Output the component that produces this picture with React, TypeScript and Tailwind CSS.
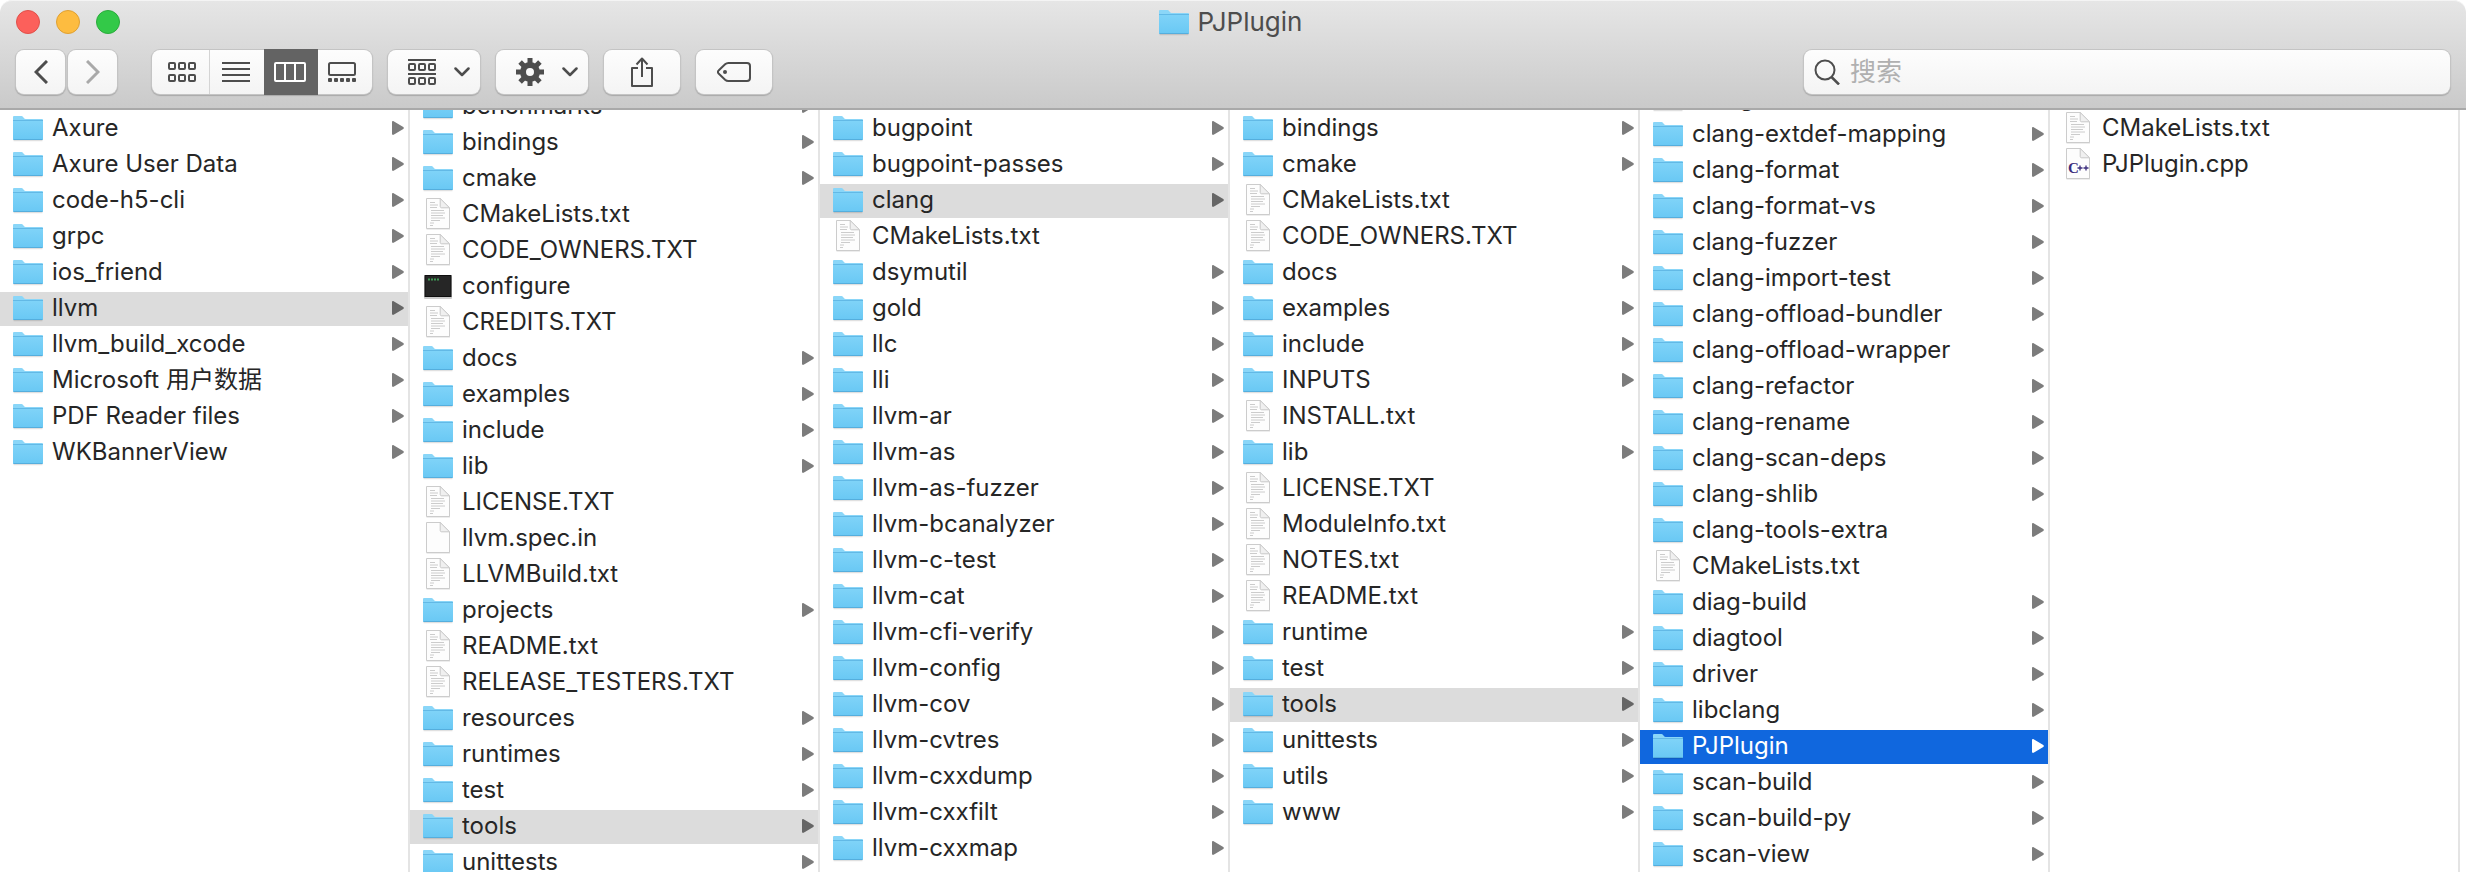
import { useState } from 'react';

type Kind = 'folder' | 'text' | 'blank' | 'exec' | 'cpp';

interface Entry {
  name: string;
  kind: Kind;
}

interface ColumnData {
  id: string;
  entries: Entry[];
  selected?: string;
  active?: boolean;
  // 列表的滚动位置
  scroll?: string;
}

const d = (name: string): Entry => ({ name, kind: 'folder' });
const f = (name: string, kind: Kind = 'text'): Entry => ({ name, kind });

const columns: ColumnData[] = [
  {
    id: 'home',
    selected: 'llvm',
    entries: [
      d('Axure'), d('Axure User Data'), d('code-h5-cli'), d('grpc'), d('ios_friend'), d('llvm'),
      d('llvm_build_xcode'), d('Microsoft 用户数据'), d('PDF Reader files'), d('WKBannerView'),
    ],
  },
  {
    id: 'llvm',
    selected: 'tools',
    scroll: '-mt-[22px]',
    entries: [
      d('benchmarks'), d('bindings'), d('cmake'), f('CMakeLists.txt'), f('CODE_OWNERS.TXT'),
      f('configure', 'exec'), f('CREDITS.TXT'), d('docs'), d('examples'), d('include'), d('lib'),
      f('LICENSE.TXT'), f('llvm.spec.in', 'blank'), f('LLVMBuild.txt'), d('projects'),
      f('README.txt'), f('RELEASE_TESTERS.TXT'), d('resources'), d('runtimes'), d('test'),
      d('tools'), d('unittests'),
    ],
  },
  {
    id: 'llvm/tools',
    selected: 'clang',
    entries: [
      d('bugpoint'), d('bugpoint-passes'), d('clang'), f('CMakeLists.txt'), d('dsymutil'),
      d('gold'), d('llc'), d('lli'), d('llvm-ar'), d('llvm-as'), d('llvm-as-fuzzer'),
      d('llvm-bcanalyzer'), d('llvm-c-test'), d('llvm-cat'), d('llvm-cfi-verify'),
      d('llvm-config'), d('llvm-cov'), d('llvm-cvtres'), d('llvm-cxxdump'), d('llvm-cxxfilt'),
      d('llvm-cxxmap'),
    ],
  },
  {
    id: 'clang',
    selected: 'tools',
    entries: [
      d('bindings'), d('cmake'), f('CMakeLists.txt'), f('CODE_OWNERS.TXT'), d('docs'),
      d('examples'), d('include'), d('INPUTS'), f('INSTALL.txt'), d('lib'), f('LICENSE.TXT'),
      f('ModuleInfo.txt'), f('NOTES.txt'), f('README.txt'), d('runtime'), d('test'), d('tools'),
      d('unittests'), d('utils'), d('www'),
    ],
  },
  {
    id: 'clang/tools',
    selected: 'PJPlugin',
    active: true,
    scroll: '-mt-[30px]',
    entries: [
      d('clang-diff'), d('clang-extdef-mapping'), d('clang-format'), d('clang-format-vs'),
      d('clang-fuzzer'), d('clang-import-test'), d('clang-offload-bundler'),
      d('clang-offload-wrapper'), d('clang-refactor'), d('clang-rename'), d('clang-scan-deps'),
      d('clang-shlib'), d('clang-tools-extra'), f('CMakeLists.txt'), d('diag-build'),
      d('diagtool'), d('driver'), d('libclang'), d('PJPlugin'), d('scan-build'),
      d('scan-build-py'), d('scan-view'),
    ],
  },
  {
    id: 'PJPlugin',
    entries: [f('CMakeLists.txt'), f('PJPlugin.cpp', 'cpp')],
  },
];

function FolderIcon() {
  return (
    <svg viewBox="0 0 32 28" className="w-8 h-7 shrink-0" aria-hidden="true">
      <defs>
        <linearGradient id="folderFront" x1="0" y1="0" x2="0" y2="1">
          <stop offset="0" stopColor="#7fd3f8" />
          <stop offset="1" stopColor="#69c8f4" />
        </linearGradient>
      </defs>
      <path d="M1.5 26.5h29" stroke="#000" strokeOpacity="0.12" strokeWidth="1.5" />
      <path d="M1 3a1 1 0 0 1 1-1h7.5c.6 0 1 .2 1.4.7l1.2 1.5c.4.5.8.8 1.5.8H30a1 1 0 0 1 1 1v4H1z" fill="#8ad6f8" />
      <path d="M1 6.8h30V25a1 1 0 0 1-1 1H2a1 1 0 0 1-1-1z" fill="url(#folderFront)" />
      <path d="M1 6.5h30" stroke="#62b9e6" strokeWidth="1" />
      <path d="M1.5 25.5h29" stroke="#55aedd" strokeWidth="1" />
    </svg>
  );
}

function PageShape() {
  return (
    <>
      <path d="M4.5 1.5h13.8L28 11v20.5H4.5z" fill="#000" fillOpacity="0.14" />
      <path d="M4.5.5h13.7l9.3 9.3v20.7h-23z" fill="#fdfdfd" stroke="#cccccc" />
      <path d="M18.2.5v7.8c0 1 .5 1.5 1.5 1.5h7.8z" fill="#f0f0f0" stroke="#c8c8c8" />
    </>
  );
}

function FileIcon({ kind }: { kind: Kind }) {
  if (kind === 'folder') return <FolderIcon />;
  if (kind === 'exec') {
    return (
      <svg viewBox="0 0 32 32" className="size-8 shrink-0" aria-hidden="true">
        <rect x="2" y="6" width="28" height="23" rx="1" fill="#000" fillOpacity="0.2" />
        <rect x="3" y="5.5" width="26" height="21" fill="#262626" stroke="#0f0f0f" />
        <path d="M6 9.500h2M9 9.500h2M12 9.500h2M15 9.500h2" stroke="#3f9a55" strokeWidth="2" />
      </svg>
    );
  }
  return (
    <svg viewBox="0 0 32 32" className="size-8 shrink-0" aria-hidden="true">
      <PageShape />
      {kind === 'text' && (
        <path
          d="M8 4.500h5M8 7h8M8 9.500h7M9 12.500h13M9 15h14M9 17.500h12M9 20h14M9 22.500h9M8 25h4M8 27.500h3"
          stroke="#cccccc"
          fill="none"
        />
      )}
      {kind === 'cpp' && (
        <>
          <text x="6" y="25" fontSize="15" fontWeight="700" fill="#3a2c7c" fontFamily="Liberation Serif, serif">C</text>
          <path d="M15.500 20h5M18 17.500v5M21.500 20h5M24 17.500v5" stroke="#3a2c7c" strokeWidth="1.300" />
        </>
      )}
    </svg>
  );
}

interface RowProps {
  entry: Entry;
  selected: boolean;
  active: boolean;
  onSelect: () => void;
}

function Row({ entry, selected, active, onSelect }: RowProps) {
  let look = 'text-[#262626]';
  let arrow = 'text-[#7c7c7c]';
  if (selected && active) {
    look = 'bg-[#1067de] text-white';
    arrow = 'text-white';
  } else if (selected) {
    look = 'bg-[#dcdcdc] text-[#262626]';
    arrow = 'text-[#666666]';
  }

  return (
    <li className="py-px">
      <button
        type="button"
        onClick={onSelect}
        className={`flex h-[34px] w-full items-center pb-0.5 pl-3 pr-1 text-left text-2xl leading-8 ${look}`}
      >
        <FileIcon kind={entry.kind} />
        <span className="ml-2 flex-1 truncate">{entry.name}</span>
        {entry.kind === 'folder' && (
          <svg viewBox="0 0 12 14" className={`h-3.5 w-3 shrink-0 ${arrow}`} aria-hidden="true">
            <path d="M0 1.200C0 .2.800-.2 1.600.200l9.700 5.900c.7.400.7 1.400 0 1.800l-9.700 5.900C.8 14.200 0 13.800 0 12.800z" fill="currentColor" />
          </svg>
        )}
      </button>
    </li>
  );
}

function Column({ column }: { column: ColumnData }) {
  const [selected, setSelected] = useState(column.selected);

  return (
    <div className="min-w-0 overflow-hidden border-r-2 border-[#e4e4e4] pt-px">
      <ul className={column.scroll}>
        {column.entries.map((entry) => (
          <Row
            key={entry.name}
            entry={entry}
            selected={entry.name === selected}
            active={Boolean(column.active)}
            onSelect={() => setSelected(entry.name)}
          />
        ))}
      </ul>
    </div>
  );
}

const raised = 'bg-linear-to-b from-[#fdfdfd] to-[#f4f4f4] shadow-[0_0_0_1px_#c4c4c4,0_1px_1px_1px_#a9a9a9]';
const toolButton = `flex h-11 items-center rounded-lg text-[#4d4d4d] ${raised}`;

function ChevronDown() {
  return (
    <svg viewBox="0 0 16 10" className="h-2.5 w-4" fill="none" stroke="currentColor" strokeWidth="2.500" strokeLinecap="round" strokeLinejoin="round" aria-hidden="true">
      <path d="M1.500 1.500 8 8l6.500-6.500" />
    </svg>
  );
}

function GridIcon() {
  return (
    <svg viewBox="0 0 28 20" className="h-5 w-7" fill="none" stroke="currentColor" strokeWidth="2" aria-hidden="true">
      {[1, 11, 21].map((x) => (
        <g key={x}>
          <rect x={x} y="1" width="6" height="6" rx="1" />
          <rect x={x} y="13" width="6" height="6" rx="1" />
        </g>
      ))}
    </svg>
  );
}

function ListIcon() {
  return (
    <svg viewBox="0 0 28 20" className="h-5 w-7" stroke="currentColor" strokeWidth="2" aria-hidden="true">
      <path d="M0 1h28M0 7h28M0 13h28M0 19h28" />
    </svg>
  );
}

function ColumnsIcon() {
  return (
    <svg viewBox="0 0 32 20" className="h-5 w-8" fill="none" stroke="currentColor" strokeWidth="2" aria-hidden="true">
      <rect x="1" y="1" width="30" height="18" rx="1" />
      <path d="M11 1v18M21 1v18" />
    </svg>
  );
}

function GalleryIcon() {
  return (
    <svg viewBox="0 0 28 20" className="h-5 w-7" aria-hidden="true">
      <rect x="1" y="1" width="26" height="12" rx="1.500" fill="none" stroke="currentColor" strokeWidth="2" />
      {[0, 6, 12, 18, 24].map((x) => (
        <rect key={x} x={x} y="16" width="4" height="4" rx="1" fill="currentColor" />
      ))}
    </svg>
  );
}

function GroupIcon() {
  return (
    <svg viewBox="0 0 28 26" className="h-[26px] w-7" fill="none" stroke="currentColor" strokeWidth="2" aria-hidden="true">
      <path d="M0 1h28M0 15h28" />
      {[1, 11, 21].map((x) => (
        <g key={x}>
          <rect x={x} y="5" width="6" height="6" rx="1" />
          <rect x={x} y="19" width="6" height="6" rx="1" />
        </g>
      ))}
    </svg>
  );
}

function GearIcon() {
  return (
    <svg viewBox="0 0 28 28" className="size-7" aria-hidden="true">
      {[0, 45, 90, 135].map((angle) => (
        <path key={angle} d="M11.500 0h5v8h-5zM11.500 20h5v8h-5z" fill="currentColor" transform={`rotate(${angle} 14 14)`} />
      ))}
      <circle cx="14" cy="14" r="7" fill="none" stroke="currentColor" strokeWidth="6" />
    </svg>
  );
}

function ShareIcon() {
  return (
    <svg viewBox="0 0 24 30" className="h-[30px] w-6" fill="none" stroke="currentColor" strokeWidth="2" aria-hidden="true">
      <path d="M8 11H2v18h20V11h-6M12 20V2M6.500 7.500 12 1.500l5.500 6" strokeLinejoin="round" />
    </svg>
  );
}

function TagIcon() {
  return (
    <svg viewBox="0 0 34 20" className="h-5 w-[34px]" aria-hidden="true">
      <path d="M11.500 1H30a3 3 0 0 1 3 3v12a3 3 0 0 1-3 3H11.500a5 5 0 0 1-3.400-1.300L1.600 11.500a2 2 0 0 1 0-3l6.500-6.200A5 5 0 0 1 11.500 1z" fill="none" stroke="currentColor" strokeWidth="2" />
      <circle cx="8" cy="10" r="2" fill="currentColor" />
    </svg>
  );
}

const views = [
  { id: 'icons', label: '图标', Icon: GridIcon, box: 'w-[58px] pl-0.5 border-r border-[#d4d4d4]' },
  { id: 'list', label: '列表', Icon: ListIcon, box: 'w-[54px] pr-0.5' },
  { id: 'columns', label: '分栏', Icon: ColumnsIcon, box: 'w-[54px] pr-0.5' },
  { id: 'gallery', label: '画廊', Icon: GalleryIcon, box: 'w-[54px] pr-1.5' },
];

function Toolbar() {
  const [view, setView] = useState('columns');

  return (
    <div className="flex items-center px-4 pt-1.5">
      <div className="flex gap-[3px]">
        <button type="button" aria-label="后退" className={`w-[49px] justify-center ${toolButton}`}>
          <svg viewBox="0 0 14 24" className="h-6 w-3.5" fill="none" stroke="currentColor" strokeWidth="3" aria-hidden="true">
            <path d="M13 1 2 12l11 11" />
          </svg>
        </button>
        <button type="button" aria-label="前进" className={`w-[49px] justify-center ${toolButton}`}>
          <svg viewBox="0 0 14 24" className="h-6 w-3.5 text-[#a9a9a9]" fill="none" stroke="currentColor" strokeWidth="3" aria-hidden="true">
            <path d="m1 1 11 11L1 23" />
          </svg>
        </button>
      </div>

      {/* 显示方式 */}
      <div className={`ml-[35px] flex h-11 items-center rounded-lg ${raised}`}>
        {views.map(({ id, label, Icon, box }) => (
          <button
            key={id}
            type="button"
            aria-label={label}
            aria-pressed={view === id}
            onClick={() => setView(id)}
            className={`flex items-center justify-center ${box} ${
              view === id ? 'h-[46px] bg-[#636363] text-white' : 'h-11 text-[#4d4d4d]'
            }`}
          >
            <Icon />
          </button>
        ))}
      </div>

      <button type="button" aria-label="分组" className={`ml-4 w-[92px] gap-[18px] pl-5 ${toolButton}`}>
        <GroupIcon />
        <ChevronDown />
      </button>
      <button type="button" aria-label="操作" className={`ml-4 w-[92px] gap-[18px] pl-5 ${toolButton}`}>
        <GearIcon />
        <ChevronDown />
      </button>
      <button type="button" aria-label="共享" className={`ml-4 w-[76px] justify-center ${toolButton}`}>
        <ShareIcon />
      </button>
      <button type="button" aria-label="标签" className={`ml-4 w-[76px] justify-center ${toolButton}`}>
        <TagIcon />
      </button>

      <label className={`ml-auto flex h-11 w-[646px] items-center rounded-lg pl-2.5 ${raised}`}>
        <svg viewBox="0 0 26 26" className="size-[26px] shrink-0 text-[#4d4d4d]" fill="none" stroke="currentColor" strokeWidth="2" aria-hidden="true">
          <circle cx="11" cy="11" r="9.500" />
          <path d="m17.500 18 7.500 7.500" strokeWidth="2.500" />
        </svg>
        <input
          type="search"
          aria-label="搜索"
          placeholder="搜索"
          className="ml-2.5 min-w-0 flex-1 bg-transparent text-[26px] leading-9 outline-none placeholder:text-[#b0b0b0]"
        />
      </label>
    </div>
  );
}

export default function App() {
  return (
    <div className="flex h-screen flex-col overflow-hidden rounded-t-xl bg-white font-['Inter','Noto_Sans_CJK_SC',sans-serif]">
      <header className="h-[110px] shrink-0 rounded-t-xl border-b-2 border-[#a9a9a9] bg-linear-to-b from-[#e6e6e6] to-[#cacaca] shadow-[inset_0_1px_0_#f4f4f4]">
        <div className="grid h-11 grid-cols-[1fr_auto_1fr] items-center">
          <div className="flex gap-4 pl-4">
            <button type="button" aria-label="关闭" className="size-6 rounded-full border border-[#e0504a] bg-[#fc605b]" />
            <button type="button" aria-label="最小化" className="size-6 rounded-full border border-[#dfa032] bg-[#fdbc40]" />
            <button type="button" aria-label="缩放" className="size-6 rounded-full border border-[#2bab3c] bg-[#33c948]" />
          </div>
          <h1 className="flex items-center gap-2 pr-1.5 text-[26px] leading-8 text-[#4d4d4d]">
            <FolderIcon />
            PJPlugin
          </h1>
        </div>
        <Toolbar />
      </header>

      <main className="grid min-h-0 flex-1 grid-cols-6 pr-1.5">
        {columns.map((column) => (
          <Column key={column.id} column={column} />
        ))}
      </main>
    </div>
  );
}
